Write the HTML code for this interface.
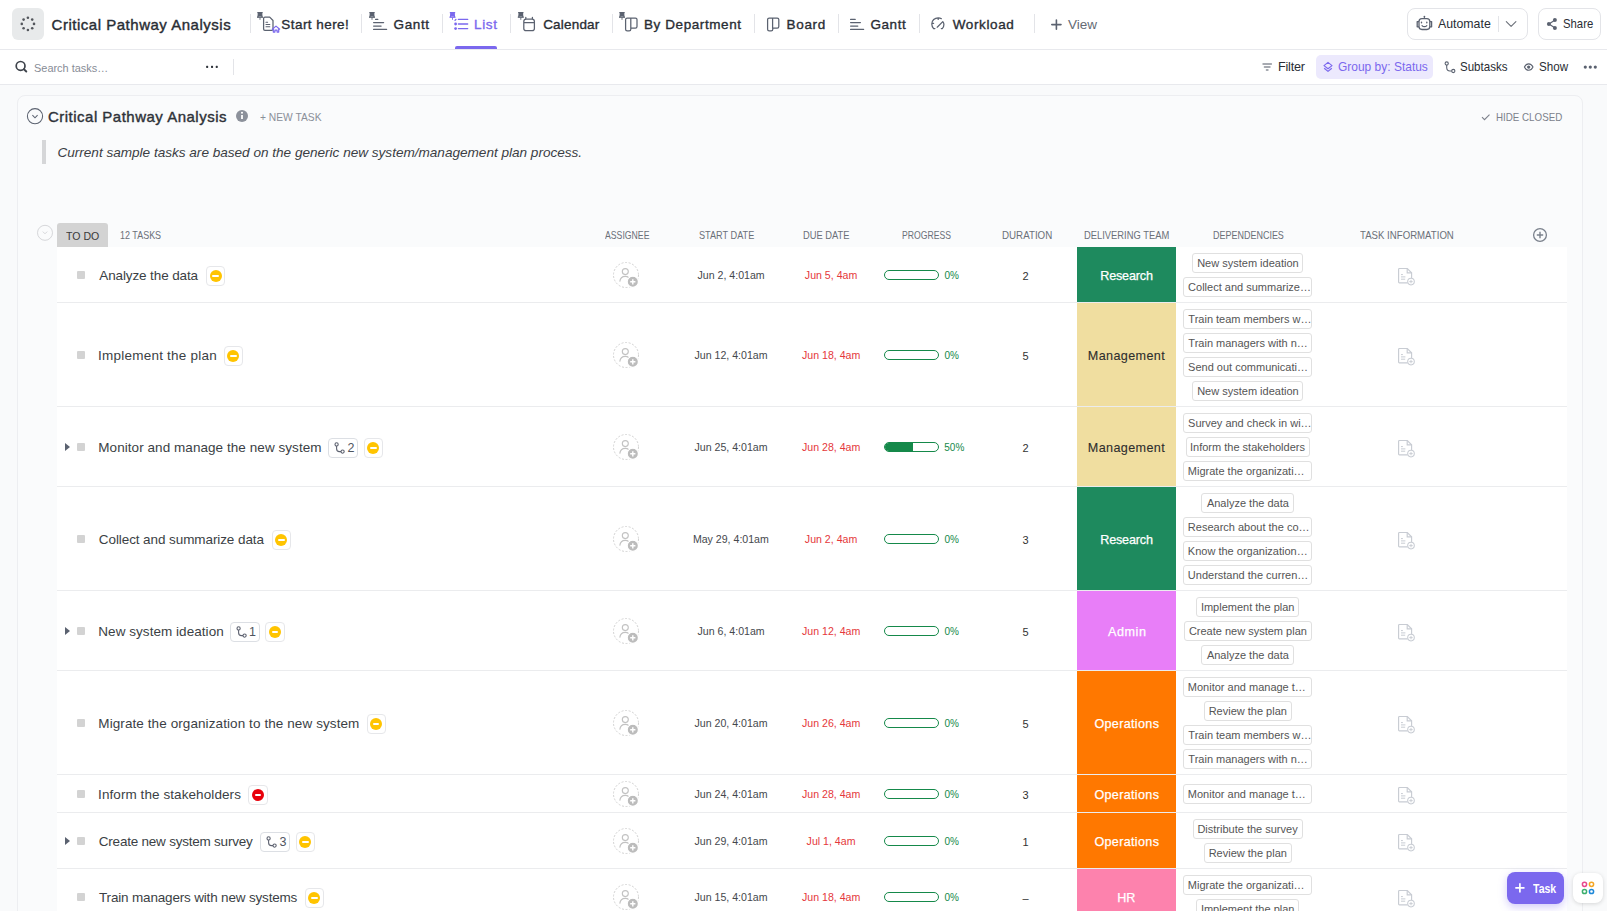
<!DOCTYPE html>
<html><head><meta charset="utf-8">
<style>
*{box-sizing:border-box;margin:0;padding:0}
html,body{width:1607px;height:911px;overflow:hidden;background:#f9fafb;font-family:"Liberation Sans",sans-serif;color:#292d34;position:relative}
.abs{position:absolute}
.t{position:absolute;white-space:nowrap}
#top{position:absolute;left:0;top:0;width:1607px;height:50px;background:#fff;border-bottom:1px solid #e8e9ed}
#tool{position:absolute;left:0;top:50px;width:1607px;height:35px;background:#fff;border-bottom:1px solid #e8e9ed}
.logo{position:absolute;left:12px;top:8px;width:32px;height:32px;border-radius:6px;background:#e8eaeb}
.sep{position:absolute;top:14px;width:1px;height:19px;background:#e3e4e8}
.uline{position:absolute;left:455px;top:46px;width:42px;height:3px;border-radius:2px 2px 0 0;background:#7b68ee}
.btn{position:absolute;top:8px;height:32px;border:1px solid #e3e4e8;border-radius:8px;background:#fff}
#cont{position:absolute;left:17px;top:95px;width:1566px;height:830px;border:1px solid #edeef1;border-radius:8px;background:#fafbfc}
.row{position:absolute;left:57px;width:1510px;background:#fff;border-bottom:1px solid #ebecee}
.arr{position:absolute;left:64.5px;width:0;height:0;border-left:5px solid #5b6270;border-top:4px solid transparent;border-bottom:4px solid transparent}
.chk{position:absolute;left:77px;width:8px;height:8px;border-radius:1px;background:#d3d3d3}
.pb{position:absolute;width:19.5px;height:19.5px;border:1px solid #e6e7ea;border-radius:4px;background:#fff}
.pc{position:absolute;left:2.8px;top:2.8px;width:12px;height:12px;border-radius:50%}
.pd{position:absolute;left:5.6px;top:7.8px;width:6.4px;height:2.2px;background:#fff;border-radius:1px}
.sb{position:absolute;width:31.5px;height:19.6px;border:1px solid #dcdfe4;border-radius:4px;background:#fff}
.sb svg{position:absolute;left:5px;top:2.5px}
.as{position:absolute;left:613px;width:28px;height:28px}
.bar{position:absolute;left:884px;width:55px;height:10px;border:1.5px solid #15894a;border-radius:6px;overflow:hidden;background:#fff}
.pf{position:absolute;left:0;top:0;bottom:0;background:#15894a}
.tm{position:absolute;left:1077px;width:99px}
.dp{position:absolute;height:20px;border:1px solid #e0e0e0;border-radius:3px;background:#fff}
.ti{position:absolute;left:1395.6px;width:20px;height:20px}
</style></head>
<body>
<div id="top">
  <div class="logo"><svg width="32" height="32" viewBox="0 0 32 32"><g fill="#54575d"><circle cx="15.90" cy="9.80" r="1.3"/><circle cx="20.21" cy="11.59" r="1.3"/><circle cx="22.00" cy="15.90" r="1.3"/><circle cx="20.21" cy="20.21" r="1.3"/><circle cx="15.90" cy="22.00" r="1.3"/><circle cx="11.59" cy="20.21" r="1.3"/><circle cx="9.80" cy="15.90" r="1.3"/><circle cx="11.59" cy="11.59" r="1.3"/></g></svg></div>
  <div class="sep" style="left:250px"></div>
  <div class="sep" style="left:361px"></div>
  <div class="sep" style="left:442px"></div>
  <div class="sep" style="left:510px"></div>
  <div class="sep" style="left:612px"></div>
  <div class="sep" style="left:754px"></div>
  <div class="sep" style="left:838px"></div>
  <div class="sep" style="left:919px"></div>
  <div class="sep" style="left:1034px"></div>
  <div class="uline"></div>
  <div class="btn" style="left:1407px;width:121px"></div>
  <div class="btn" style="left:1538px;width:63px"></div>
  <div class="sep" style="left:1498px;top:16px;height:16px"></div>
</div>
<div id="tool"></div>
<div class="abs" style="left:1316px;top:55px;width:117px;height:24px;border-radius:5px;background:#ece9fd"></div>
<div class="sep" style="left:233px;top:59px;height:16px"></div>
<svg class="abs" style="left:0;top:0" width="1607" height="85" viewBox="0 0 1607 85" fill="none">
 <defs>
  <g id="pin"><path d="M5.3 4.6h5.4M6.4 4.6l-.4 4.4M9.6 4.6l.4 4.4" stroke-width="1.2"/><path d="M6.3 5h3.4l.4 3.6H5.9z" stroke="none"/><path d="M5 9.2h6" stroke-width="1.3"/><path d="M8 9.6v2.2" stroke-width="0.9"/></g>
 </defs>
 <g stroke="#5b6270" fill="#5b6270"><use href="#pin" x="252" y="8"/><use href="#pin" x="364" y="8"/><use href="#pin" x="512.8" y="8"/><use href="#pin" x="614" y="8"/></g>
 <g stroke="#7b68ee" fill="#7b68ee"><use href="#pin" x="444.5" y="8"/></g>
 <g stroke="#5b6270" stroke-width="1.25" stroke-linecap="round" stroke-linejoin="round">
  <!-- doc -->
  <path d="M263.6 18.5c0-.8.5-1.4 1.3-1.4h4.8l3.3 3.4v8.5c0 .8-.5 1.4-1.3 1.4h-6.8c-.8 0-1.3-.6-1.3-1.4z"/>
  <path d="M266 22.2h1.6M266 24.5h3.8M266 26.8h3.8" stroke-width="1.1"/>
  <!-- gantt1 -->
  <path d="M375.6 19.4h2.2M373.6 22.5h10M373.6 26h7.5M373.6 29.4h13"/>
  <!-- calendar -->
  <path d="M523.8 21.4c0-1.4 1-2.4 2.3-2.4h6c1.3 0 2.3 1 2.3 2.4v7.1c0 1.3-1 2.2-2.3 2.2h-6c-1.3 0-2.3-.9-2.3-2.2zM523.8 22.5h10.6M525.8 17.3v1.8M532.4 17.3v1.8"/>
  <!-- by dept board -->
  <path d="M625.6 19.6c0-.9.7-1.6 1.6-1.6h8.2c.9 0 1.6.7 1.6 1.6v6.8c0 .9-.7 1.6-1.6 1.6h-4.6v1.2c0 .9-.7 1.6-1.6 1.6h-2c-.9 0-1.6-.7-1.6-1.6zM630.8 18.2v10"/>
  <!-- board -->
  <path d="M767.6 19.6c0-.9.7-1.6 1.6-1.6h8c.9 0 1.6.7 1.6 1.6v6.8c0 .9-.7 1.6-1.6 1.6h-4.4v1.2c0 .9-.7 1.6-1.6 1.6h-2c-.9 0-1.6-.7-1.6-1.6zM772.6 18.2v10"/>
  <!-- gantt2 -->
  <path d="M850.6 19.4h4.6M850.6 22.5h9.8M850.6 26h7.2M850.6 29.4h13"/>
  <!-- workload -->
  <path d="M933.6 28.6c-1.2-1.3-1.8-2.8-1.8-4.6 0-3.6 2.9-6.2 6.4-6.2 1.2 0 2.3.3 3.2.9M943 21.8c.6.8.9 1.7.9 2.8 0 1.6-.5 2.9-1.6 4M934 28.6h.9M941.3 28.6h1M938.2 18.1v1.3M932.3 23.3h1.3M937.2 27.2l5.6-5.6"/>
  <!-- plus view -->
  <path d="M1056.4 20v9.2M1051.8 24.6h9.2" stroke-width="1.6"/>
  <!-- robot -->
  <path d="M1419 21.5c0-1.6 1.3-2.9 2.9-2.9h5c1.6 0 2.9 1.3 2.9 2.9v5.1c0 1.6-1.3 2.9-2.9 2.9h-5c-1.6 0-2.9-1.3-2.9-2.9zM1417.2 21.6v5.2M1431.6 21.6v5.2M1417.2 21.6h1.8M1417.2 26.8h1.8M1431.6 21.6h-1.8M1431.6 26.8h-1.8M1424.4 17.6v1" stroke-width="1.3"/>
  <circle cx="1424.4" cy="16.6" r="0.9" fill="#5b6270" stroke="none"/>
  <path d="M1421.5 22.2v.6M1426.8 22.2v.6" stroke-width="1.4"/>
  <path d="M1422 25.6c.7.8 1.5 1.1 2.4 1.1s1.7-.3 2.4-1.1" stroke-width="1.2"/>
  <!-- chevron -->
  <path d="M1506.3 21.6l4.8 4.8 4.8-4.8" stroke="#6b7079" stroke-width="1.1"/>
  <!-- share -->
  <path d="M1549 24l6-4M1549 24l6 4" stroke-width="1.1"/>
  <circle cx="1554.9" cy="20" r="2" fill="#5b6270" stroke="none"/><circle cx="1548.9" cy="24" r="2" fill="#5b6270" stroke="none"/><circle cx="1554.9" cy="27.9" r="2" fill="#5b6270" stroke="none"/>
  <!-- search -->
  <circle cx="20.6" cy="65.9" r="4.4" stroke="#3f444c" stroke-width="1.7"/><path d="M23.9 69.2l2.4 2.3" stroke="#3f444c" stroke-width="1.9"/>
 </g>
 <!-- home badge purple -->
 <path d="M272 29.5l4-3.4 4 3.4M273.3 28.5v3.6h1.6v-2h2.2v2h1.6v-3.6" stroke="#7b68ee" stroke-width="1.2" stroke-linejoin="round"/>
 <!-- list icon -->
 <g fill="#7b68ee" stroke="none"><circle cx="455.6" cy="24" r="1.4"/><circle cx="455.6" cy="28.6" r="1.4"/></g>
 <path d="M458.4 19.4h9.3M458.4 24h9.3M458.4 28.6h9.3M455 20.4l.9-.9" stroke="#7b68ee" stroke-width="1.3" stroke-linecap="round"/>
 <!-- toolbar dots -->
 <g fill="#2f343b"><rect x="206.1" y="65.8" width="2.1" height="2.1" rx=".6"/><rect x="211" y="65.8" width="2.1" height="2.1" rx=".6"/><rect x="215.7" y="65.8" width="2.1" height="2.1" rx=".6"/></g>
 <!-- filter -->
 <path d="M1263 64h8.4M1264.4 67h5.6M1266.4 70h1.6" stroke="#8a8f98" stroke-width="1.4" stroke-linecap="round"/>
 <!-- group layers -->
 <path d="M1328 62.4l4 3.2-4 3.2-4-3.2zM1324.2 68.2l3.8 3.2 3.8-3.2" stroke="#7b68ee" stroke-width="1.2" stroke-linejoin="round"/>
 <!-- subtasks -->
 <g stroke="#5b6270" stroke-width="1.1"><circle cx="1446.7" cy="63.5" r="1.6"/><circle cx="1453.3" cy="71" r="1.6"/><path d="M1446.7 65.1v2.4c0 1.8 1.3 3.5 3.3 3.5h1.7"/></g>
 <!-- show eye -->
 <g stroke="#5b6270" stroke-width="1.05"><path d="M1524.4 67.1c1-2.1 2.6-3.2 4.3-3.2s3.3 1.1 4.3 3.2c-1 2.1-2.6 3.2-4.3 3.2s-3.3-1.1-4.3-3.2z"/><circle cx="1528.7" cy="67.1" r="1.1" fill="#5b6270"/></g>
 <!-- more dots -->
 <g fill="#5b6270"><circle cx="1585.3" cy="67.1" r="1.6"/><circle cx="1590.3" cy="67.1" r="1.6"/><circle cx="1595.3" cy="67.1" r="1.6"/></g>
</svg>

<div id="cont"></div>
<svg class="abs" style="left:0;top:96px" width="1607" height="160" viewBox="0 96 1607 160" fill="none">
 <circle cx="35" cy="116.2" r="7.6" stroke="#5b6270" stroke-width="1.05"/>
 <path d="M32.4 115.2l2.6 2.6 2.6-2.6" stroke="#5b6270" stroke-width="1.05"/>
 <circle cx="242" cy="116" r="6" fill="#8c919b"/>
 <path d="M242 115v4" stroke="#fff" stroke-width="1.8"/><circle cx="242" cy="112.8" r="1.05" fill="#fff"/>
 <path d="M1482 117.2l2.5 2.5 5-5" stroke="#7c818b" stroke-width="1.1"/>
 <circle cx="45" cy="232.8" r="7.5" stroke="#d6d7da" stroke-width="1"/>
 <path d="M42.8 231.6l2.2 2.2 2.2-2.2" stroke="#d6d7da" stroke-width="1"/>
 <circle cx="1540" cy="235" r="6.4" stroke="#7a818c" stroke-width="1.3"/>
 <path d="M1540 231.8v6.4M1536.8 235h6.4" stroke="#7a818c" stroke-width="1.4"/>
</svg>
<div class="abs" style="left:42px;top:140px;width:4px;height:24px;background:#d5d6d8"></div>
<div class="abs" style="left:57px;top:223px;width:51px;height:24px;border-radius:3px 3px 0 0;background:#d3d3d3"></div>
<div class="t" style="left:51.55px;top:16.00px;font-size:15px;line-height:18px;color:#292d34;letter-spacing:0.517px;-webkit-text-stroke:0.4px #292d34">Critical Pathway Analysis</div>
<div class="t" style="left:281.30px;top:17.00px;font-size:13.5px;line-height:16px;color:#292d34;letter-spacing:0.445px;-webkit-text-stroke:0.35px #292d34">Start here!</div>
<div class="t" style="left:393.50px;top:17.00px;font-size:13.5px;line-height:16px;color:#292d34;letter-spacing:0.625px;-webkit-text-stroke:0.35px #292d34">Gantt</div>
<div class="t" style="left:474.00px;top:17.00px;font-size:13.5px;line-height:16px;color:#7b68ee;letter-spacing:0.667px;-webkit-text-stroke:0.35px #7b68ee">List</div>
<div class="t" style="left:543.20px;top:17.00px;font-size:13.5px;line-height:16px;color:#292d34;letter-spacing:0.186px;-webkit-text-stroke:0.35px #292d34">Calendar</div>
<div class="t" style="left:644.00px;top:17.00px;font-size:13.5px;line-height:16px;color:#292d34;letter-spacing:0.583px;-webkit-text-stroke:0.35px #292d34">By Department</div>
<div class="t" style="left:786.60px;top:17.00px;font-size:13.5px;line-height:16px;color:#292d34;letter-spacing:0.637px;-webkit-text-stroke:0.35px #292d34">Board</div>
<div class="t" style="left:870.50px;top:17.00px;font-size:13.5px;line-height:16px;color:#292d34;letter-spacing:0.550px;-webkit-text-stroke:0.35px #292d34">Gantt</div>
<div class="t" style="left:952.70px;top:17.00px;font-size:13.5px;line-height:16px;color:#292d34;letter-spacing:0.614px;-webkit-text-stroke:0.35px #292d34">Workload</div>
<div class="t" style="left:1068.00px;top:17.00px;font-size:13.5px;line-height:16px;color:#656b75;letter-spacing:0.000px">View</div>
<div class="t" style="left:1438.00px;top:16.00px;font-size:12.8px;line-height:15px;color:#292d34;transform:scaleX(0.9630);transform-origin:0 0">Automate</div>
<div class="t" style="left:1563.16px;top:16.00px;font-size:12.8px;line-height:15px;color:#292d34;transform:scaleX(0.8848);transform-origin:0 0">Share</div>
<div class="t" style="left:33.93px;top:61.00px;font-size:11.6px;line-height:14px;color:#878c96;transform:scaleX(0.9434);transform-origin:0 0">Search tasks…</div>
<div class="t" style="left:1278.00px;top:60.00px;font-size:12.6px;line-height:15px;color:#292d34;letter-spacing:-0.200px">Filter</div>
<div class="t" style="left:1337.92px;top:60.00px;font-size:12.6px;line-height:15px;color:#7b68ee;transform:scaleX(0.9509);transform-origin:0 0">Group by: Status</div>
<div class="t" style="left:1460.14px;top:60.00px;font-size:12.6px;line-height:15px;color:#292d34;transform:scaleX(0.9168);transform-origin:0 0">Subtasks</div>
<div class="t" style="left:1539.04px;top:60.00px;font-size:12.6px;line-height:15px;color:#292d34;transform:scaleX(0.9236);transform-origin:0 0">Show</div>
<div class="t" style="left:47.95px;top:108.00px;font-size:15px;line-height:18px;color:#2e3238;letter-spacing:0.492px;-webkit-text-stroke:0.4px #2e3238">Critical Pathway Analysis</div>
<div class="t" style="left:259.83px;top:111.00px;font-size:11px;line-height:13px;color:#8a8f99;transform:scaleX(0.9333);transform-origin:0 0">+ NEW TASK</div>
<div class="t" style="left:1495.73px;top:111.00px;font-size:11px;line-height:13px;color:#7c818b;transform:scaleX(0.8884);transform-origin:0 0">HIDE CLOSED</div>
<div class="t" style="left:57.45px;top:145.00px;font-size:13.6px;line-height:16px;color:#3b3e44;letter-spacing:-0.015px;font-style:italic">Current sample tasks are based on the generic new system/management plan process.</div>
<div class="t" style="left:65.66px;top:230.00px;font-size:11px;line-height:13px;color:#3a3a3a;transform:scaleX(0.9600);transform-origin:0 0">TO DO</div>
<div class="t" style="left:120.36px;top:229.00px;font-size:10.5px;line-height:13px;color:#6b7079;transform:scaleX(0.8556);transform-origin:0 0">12 TASKS</div>
<div class="t" style="left:604.60px;top:230.00px;font-size:10.2px;line-height:12px;color:#6b7079;transform:scaleX(0.8538);transform-origin:0 0">ASSIGNEE</div>
<div class="t" style="left:699.05px;top:230.00px;font-size:10.2px;line-height:12px;color:#6b7079;transform:scaleX(0.8984);transform-origin:0 0">START DATE</div>
<div class="t" style="left:803.31px;top:230.00px;font-size:10.2px;line-height:12px;color:#6b7079;transform:scaleX(0.9160);transform-origin:0 0">DUE DATE</div>
<div class="t" style="left:902.06px;top:230.00px;font-size:10.2px;line-height:12px;color:#6b7079;transform:scaleX(0.8474);transform-origin:0 0">PROGRESS</div>
<div class="t" style="left:1001.58px;top:230.00px;font-size:10.2px;line-height:12px;color:#6b7079;transform:scaleX(0.9580);transform-origin:0 0">DURATION</div>
<div class="t" style="left:1083.91px;top:230.00px;font-size:10.2px;line-height:12px;color:#6b7079;transform:scaleX(0.9199);transform-origin:0 0">DELIVERING TEAM</div>
<div class="t" style="left:1213.04px;top:230.00px;font-size:10.2px;line-height:12px;color:#6b7079;transform:scaleX(0.8815);transform-origin:0 0">DEPENDENCIES</div>
<div class="t" style="left:1359.76px;top:230.00px;font-size:10.2px;line-height:12px;color:#6b7079;transform:scaleX(0.9455);transform-origin:0 0">TASK INFORMATION</div>
<div class="row" style="top:247px;height:56px"></div><div class="chk" style="top:271.0px"></div><div class="t" style="left:99.30px;top:268.00px;font-size:13.5px;line-height:16px;color:#3b3f45;letter-spacing:-0.120px">Analyze the data</div><div class="pb" style="left:205.8px;top:266.2px"><span class="pc" style="background:#ffc400"></span><span class="pd"></span></div><div class="as" style="top:262.0px"><svg width="28" height="28" viewBox="0 0 28 28" fill="none"><circle cx="13" cy="13" r="12.5" stroke="#d2d2d2" stroke-width="1" stroke-dasharray="2 1.6"/><circle cx="12.3" cy="9.6" r="3" stroke="#c2c2c2" stroke-width="1.1"/><path d="M6.8 19.6c.3-3 2.6-5.2 5.5-5.2 1.4 0 2.6.5 3.6 1.3" stroke="#c2c2c2" stroke-width="1.1"/><circle cx="19.8" cy="19.8" r="5.6" fill="#bcbcbc" stroke="#fff" stroke-width="1.2"/><path d="M19.8 17.2v5.2M17.2 19.8h5.2" stroke="#fff" stroke-width="1.4"/></svg></div><div class="t" style="left:697.50px;top:269.00px;font-size:10.6px;line-height:13px;color:#45484d;letter-spacing:0.000px">Jun 2, 4:01am</div><div class="t" style="left:804.85px;top:269.00px;font-size:10.6px;line-height:13px;color:#e5383b;letter-spacing:0.000px">Jun 5, 4am</div><div class="bar" style="top:270.0px"></div><div class="t" style="left:944.55px;top:270.00px;font-size:10px;line-height:12px;color:#15894a;letter-spacing:0.000px">0%</div><div class="t" style="left:1022.58px;top:270.00px;font-size:11px;line-height:13px;color:#333333;letter-spacing:0.000px">2</div><div class="tm" style="top:247px;height:55px;background:#1e8a5e"></div><div class="t" style="left:1100.25px;top:269.00px;font-size:12.6px;line-height:15px;color:#ffffff;letter-spacing:-0.179px;-webkit-text-stroke:0.25px #ffffff">Research</div><div class="dp" style="left:1192.4px;top:253px;width:111.0px"></div><div class="t" style="left:1197.15px;top:257.00px;font-size:11px;line-height:13px;color:#555555;letter-spacing:0.000px">New system ideation</div><div class="dp" style="left:1183.4px;top:277px;width:129.0px"></div><div class="t" style="left:1188.10px;top:281.00px;font-size:11px;line-height:13px;color:#555555;letter-spacing:0.000px">Collect and summarize…</div><div class="ti" style="top:266.9px"><svg width="20" height="20" viewBox="0 0 20 20" fill="none"><path d="M11.6 15.8H3.4c-.5 0-.8-.3-.8-.8V2.3c0-.5.3-.8.8-.8h7.9l4.3 4.3v5.4" stroke="#c8ccd3" stroke-width="1.15"/><path d="M11.2 1.7v4.2h4.2" stroke="#c8ccd3" stroke-width="1.15"/><path d="M5 7.6h1.9M5 9.9h4.4M5 12.2h4.2" stroke="#c8ccd3" stroke-width="1"/><circle cx="15" cy="14.6" r="3.3" fill="#fff" stroke="#c8ccd3" stroke-width="1.05"/><path d="M15 12.9v3.4M13.3 14.6h3.4" stroke="#c8ccd3" stroke-width="0.95"/></svg></div>
<div class="row" style="top:303px;height:104px"></div><div class="chk" style="top:351.0px"></div><div class="t" style="left:98.05px;top:348.00px;font-size:13.5px;line-height:16px;color:#3b3f45;letter-spacing:0.226px">Implement the plan</div><div class="pb" style="left:223.7px;top:346.2px"><span class="pc" style="background:#ffc400"></span><span class="pd"></span></div><div class="as" style="top:342.0px"><svg width="28" height="28" viewBox="0 0 28 28" fill="none"><circle cx="13" cy="13" r="12.5" stroke="#d2d2d2" stroke-width="1" stroke-dasharray="2 1.6"/><circle cx="12.3" cy="9.6" r="3" stroke="#c2c2c2" stroke-width="1.1"/><path d="M6.8 19.6c.3-3 2.6-5.2 5.5-5.2 1.4 0 2.6.5 3.6 1.3" stroke="#c2c2c2" stroke-width="1.1"/><circle cx="19.8" cy="19.8" r="5.6" fill="#bcbcbc" stroke="#fff" stroke-width="1.2"/><path d="M19.8 17.2v5.2M17.2 19.8h5.2" stroke="#fff" stroke-width="1.4"/></svg></div><div class="t" style="left:694.50px;top:349.00px;font-size:10.6px;line-height:13px;color:#45484d;letter-spacing:0.000px">Jun 12, 4:01am</div><div class="t" style="left:801.98px;top:349.00px;font-size:10.6px;line-height:13px;color:#e5383b;letter-spacing:0.000px">Jun 18, 4am</div><div class="bar" style="top:350.0px"></div><div class="t" style="left:944.55px;top:350.00px;font-size:10px;line-height:12px;color:#15894a;letter-spacing:0.000px">0%</div><div class="t" style="left:1022.58px;top:350.00px;font-size:11px;line-height:13px;color:#333333;letter-spacing:0.000px">5</div><div class="tm" style="top:303px;height:103px;background:#f0dea0"></div><div class="t" style="left:1087.85px;top:349.00px;font-size:12.6px;line-height:15px;color:#2e2e2e;letter-spacing:0.367px;-webkit-text-stroke:0.1px #2e2e2e">Management</div><div class="dp" style="left:1183.4px;top:309px;width:129.0px"></div><div class="t" style="left:1188.35px;top:313.00px;font-size:11px;line-height:13px;color:#555555;letter-spacing:0.000px">Train team members w…</div><div class="dp" style="left:1183.4px;top:333px;width:129.0px"></div><div class="t" style="left:1188.35px;top:337.00px;font-size:11px;line-height:13px;color:#555555;letter-spacing:0.000px">Train managers with n…</div><div class="dp" style="left:1183.4px;top:357px;width:129.0px"></div><div class="t" style="left:1188.10px;top:361.00px;font-size:11px;line-height:13px;color:#555555;letter-spacing:0.000px">Send out communicati…</div><div class="dp" style="left:1192.4px;top:381px;width:111.0px"></div><div class="t" style="left:1197.15px;top:385.00px;font-size:11px;line-height:13px;color:#555555;letter-spacing:0.000px">New system ideation</div><div class="ti" style="top:346.9px"><svg width="20" height="20" viewBox="0 0 20 20" fill="none"><path d="M11.6 15.8H3.4c-.5 0-.8-.3-.8-.8V2.3c0-.5.3-.8.8-.8h7.9l4.3 4.3v5.4" stroke="#c8ccd3" stroke-width="1.15"/><path d="M11.2 1.7v4.2h4.2" stroke="#c8ccd3" stroke-width="1.15"/><path d="M5 7.6h1.9M5 9.9h4.4M5 12.2h4.2" stroke="#c8ccd3" stroke-width="1"/><circle cx="15" cy="14.6" r="3.3" fill="#fff" stroke="#c8ccd3" stroke-width="1.05"/><path d="M15 12.9v3.4M13.3 14.6h3.4" stroke="#c8ccd3" stroke-width="0.95"/></svg></div>
<div class="row" style="top:407px;height:80px"></div><div class="arr" style="top:443.0px"></div><div class="chk" style="top:443.0px"></div><div class="t" style="left:98.30px;top:440.00px;font-size:13.5px;line-height:16px;color:#3b3f45;letter-spacing:0.059px">Monitor and manage the new system</div><div class="sb" style="left:328.2px;top:438.2px;width:29.7px"><svg width="12" height="13" viewBox="0 0 12 13" fill="none"><circle cx="2.6" cy="2.4" r="1.6" stroke="#5d6270" stroke-width="1.1"/><circle cx="8.6" cy="9.6" r="1.6" stroke="#5d6270" stroke-width="1.1"/><path d="M2.6 4v2.8c0 1.6 1.1 2.8 2.8 2.8H7" stroke="#5d6270" stroke-width="1.1"/></svg></div><div class="t" style="left:347.40px;top:441.00px;font-size:12.5px;line-height:15px;color:#4f5560;letter-spacing:0.000px">2</div><div class="pb" style="left:363.7px;top:438.2px"><span class="pc" style="background:#ffc400"></span><span class="pd"></span></div><div class="as" style="top:434.0px"><svg width="28" height="28" viewBox="0 0 28 28" fill="none"><circle cx="13" cy="13" r="12.5" stroke="#d2d2d2" stroke-width="1" stroke-dasharray="2 1.6"/><circle cx="12.3" cy="9.6" r="3" stroke="#c2c2c2" stroke-width="1.1"/><path d="M6.8 19.6c.3-3 2.6-5.2 5.5-5.2 1.4 0 2.6.5 3.6 1.3" stroke="#c2c2c2" stroke-width="1.1"/><circle cx="19.8" cy="19.8" r="5.6" fill="#bcbcbc" stroke="#fff" stroke-width="1.2"/><path d="M19.8 17.2v5.2M17.2 19.8h5.2" stroke="#fff" stroke-width="1.4"/></svg></div><div class="t" style="left:694.50px;top:441.00px;font-size:10.6px;line-height:13px;color:#45484d;letter-spacing:0.000px">Jun 25, 4:01am</div><div class="t" style="left:801.98px;top:441.00px;font-size:10.6px;line-height:13px;color:#e5383b;letter-spacing:0.000px">Jun 28, 4am</div><div class="bar" style="top:442.0px"><span class="pf" style="width:27.5px"></span></div><div class="t" style="left:944.30px;top:442.00px;font-size:10px;line-height:12px;color:#15894a;letter-spacing:0.000px">50%</div><div class="t" style="left:1022.58px;top:442.00px;font-size:11px;line-height:13px;color:#333333;letter-spacing:0.000px">2</div><div class="tm" style="top:407px;height:79px;background:#f0dea0"></div><div class="t" style="left:1087.85px;top:441.00px;font-size:12.6px;line-height:15px;color:#2e2e2e;letter-spacing:0.367px;-webkit-text-stroke:0.1px #2e2e2e">Management</div><div class="dp" style="left:1183.4px;top:413px;width:129.0px"></div><div class="t" style="left:1188.10px;top:417.00px;font-size:11px;line-height:13px;color:#555555;letter-spacing:0.000px">Survey and check in wi…</div><div class="dp" style="left:1185.5px;top:437px;width:124.8px"></div><div class="t" style="left:1190.03px;top:441.00px;font-size:11px;line-height:13px;color:#555555;letter-spacing:0.000px">Inform the stakeholders</div><div class="dp" style="left:1183.4px;top:461px;width:129.0px"></div><div class="t" style="left:1187.85px;top:465.00px;font-size:11px;line-height:13px;color:#555555;letter-spacing:0.000px">Migrate the organizati…</div><div class="ti" style="top:438.9px"><svg width="20" height="20" viewBox="0 0 20 20" fill="none"><path d="M11.6 15.8H3.4c-.5 0-.8-.3-.8-.8V2.3c0-.5.3-.8.8-.8h7.9l4.3 4.3v5.4" stroke="#c8ccd3" stroke-width="1.15"/><path d="M11.2 1.7v4.2h4.2" stroke="#c8ccd3" stroke-width="1.15"/><path d="M5 7.6h1.9M5 9.9h4.4M5 12.2h4.2" stroke="#c8ccd3" stroke-width="1"/><circle cx="15" cy="14.6" r="3.3" fill="#fff" stroke="#c8ccd3" stroke-width="1.05"/><path d="M15 12.9v3.4M13.3 14.6h3.4" stroke="#c8ccd3" stroke-width="0.95"/></svg></div>
<div class="row" style="top:487px;height:104px"></div><div class="chk" style="top:535.0px"></div><div class="t" style="left:98.80px;top:532.00px;font-size:13.5px;line-height:16px;color:#3b3f45;letter-spacing:-0.086px">Collect and summarize data</div><div class="pb" style="left:271.7px;top:530.2px"><span class="pc" style="background:#ffc400"></span><span class="pd"></span></div><div class="as" style="top:526.0px"><svg width="28" height="28" viewBox="0 0 28 28" fill="none"><circle cx="13" cy="13" r="12.5" stroke="#d2d2d2" stroke-width="1" stroke-dasharray="2 1.6"/><circle cx="12.3" cy="9.6" r="3" stroke="#c2c2c2" stroke-width="1.1"/><path d="M6.8 19.6c.3-3 2.6-5.2 5.5-5.2 1.4 0 2.6.5 3.6 1.3" stroke="#c2c2c2" stroke-width="1.1"/><circle cx="19.8" cy="19.8" r="5.6" fill="#bcbcbc" stroke="#fff" stroke-width="1.2"/><path d="M19.8 17.2v5.2M17.2 19.8h5.2" stroke="#fff" stroke-width="1.4"/></svg></div><div class="t" style="left:692.88px;top:533.00px;font-size:10.6px;line-height:13px;color:#45484d;letter-spacing:0.000px">May 29, 4:01am</div><div class="t" style="left:804.85px;top:533.00px;font-size:10.6px;line-height:13px;color:#e5383b;letter-spacing:0.000px">Jun 2, 4am</div><div class="bar" style="top:534.0px"></div><div class="t" style="left:944.55px;top:534.00px;font-size:10px;line-height:12px;color:#15894a;letter-spacing:0.000px">0%</div><div class="t" style="left:1022.58px;top:534.00px;font-size:11px;line-height:13px;color:#333333;letter-spacing:0.000px">3</div><div class="tm" style="top:487px;height:103px;background:#1e8a5e"></div><div class="t" style="left:1100.25px;top:533.00px;font-size:12.6px;line-height:15px;color:#ffffff;letter-spacing:-0.179px;-webkit-text-stroke:0.25px #ffffff">Research</div><div class="dp" style="left:1201.4px;top:493px;width:93.0px"></div><div class="t" style="left:1206.90px;top:497.00px;font-size:11px;line-height:13px;color:#555555;letter-spacing:0.000px">Analyze the data</div><div class="dp" style="left:1183.4px;top:517px;width:129.0px"></div><div class="t" style="left:1187.85px;top:521.00px;font-size:11px;line-height:13px;color:#555555;letter-spacing:0.000px">Research about the co…</div><div class="dp" style="left:1183.4px;top:541px;width:129.0px"></div><div class="t" style="left:1187.85px;top:545.00px;font-size:11px;line-height:13px;color:#555555;letter-spacing:0.000px">Know the organization…</div><div class="dp" style="left:1183.4px;top:565px;width:129.0px"></div><div class="t" style="left:1187.85px;top:569.00px;font-size:11px;line-height:13px;color:#555555;letter-spacing:0.000px">Understand the curren…</div><div class="ti" style="top:530.9px"><svg width="20" height="20" viewBox="0 0 20 20" fill="none"><path d="M11.6 15.8H3.4c-.5 0-.8-.3-.8-.8V2.3c0-.5.3-.8.8-.8h7.9l4.3 4.3v5.4" stroke="#c8ccd3" stroke-width="1.15"/><path d="M11.2 1.7v4.2h4.2" stroke="#c8ccd3" stroke-width="1.15"/><path d="M5 7.6h1.9M5 9.9h4.4M5 12.2h4.2" stroke="#c8ccd3" stroke-width="1"/><circle cx="15" cy="14.6" r="3.3" fill="#fff" stroke="#c8ccd3" stroke-width="1.05"/><path d="M15 12.9v3.4M13.3 14.6h3.4" stroke="#c8ccd3" stroke-width="0.95"/></svg></div>
<div class="row" style="top:591px;height:80px"></div><div class="arr" style="top:627.0px"></div><div class="chk" style="top:627.0px"></div><div class="t" style="left:98.30px;top:624.00px;font-size:13.5px;line-height:16px;color:#3b3f45;letter-spacing:0.047px">New system ideation</div><div class="sb" style="left:230.4px;top:622.2px;width:29.2px"><svg width="12" height="13" viewBox="0 0 12 13" fill="none"><circle cx="2.6" cy="2.4" r="1.6" stroke="#5d6270" stroke-width="1.1"/><circle cx="8.6" cy="9.6" r="1.6" stroke="#5d6270" stroke-width="1.1"/><path d="M2.6 4v2.8c0 1.6 1.1 2.8 2.8 2.8H7" stroke="#5d6270" stroke-width="1.1"/></svg></div><div class="t" style="left:249.10px;top:625.00px;font-size:12.5px;line-height:15px;color:#4f5560;letter-spacing:0.000px">1</div><div class="pb" style="left:265.4px;top:622.2px"><span class="pc" style="background:#ffc400"></span><span class="pd"></span></div><div class="as" style="top:618.0px"><svg width="28" height="28" viewBox="0 0 28 28" fill="none"><circle cx="13" cy="13" r="12.5" stroke="#d2d2d2" stroke-width="1" stroke-dasharray="2 1.6"/><circle cx="12.3" cy="9.6" r="3" stroke="#c2c2c2" stroke-width="1.1"/><path d="M6.8 19.6c.3-3 2.6-5.2 5.5-5.2 1.4 0 2.6.5 3.6 1.3" stroke="#c2c2c2" stroke-width="1.1"/><circle cx="19.8" cy="19.8" r="5.6" fill="#bcbcbc" stroke="#fff" stroke-width="1.2"/><path d="M19.8 17.2v5.2M17.2 19.8h5.2" stroke="#fff" stroke-width="1.4"/></svg></div><div class="t" style="left:697.50px;top:625.00px;font-size:10.6px;line-height:13px;color:#45484d;letter-spacing:0.000px">Jun 6, 4:01am</div><div class="t" style="left:801.98px;top:625.00px;font-size:10.6px;line-height:13px;color:#e5383b;letter-spacing:0.000px">Jun 12, 4am</div><div class="bar" style="top:626.0px"></div><div class="t" style="left:944.55px;top:626.00px;font-size:10px;line-height:12px;color:#15894a;letter-spacing:0.000px">0%</div><div class="t" style="left:1022.58px;top:626.00px;font-size:11px;line-height:13px;color:#333333;letter-spacing:0.000px">5</div><div class="tm" style="top:591px;height:79px;background:#e87ef8"></div><div class="t" style="left:1108.00px;top:625.00px;font-size:12.6px;line-height:15px;color:#ffffff;letter-spacing:0.562px;-webkit-text-stroke:0.25px #ffffff">Admin</div><div class="dp" style="left:1196.4px;top:597px;width:103.0px"></div><div class="t" style="left:1200.90px;top:601.00px;font-size:11px;line-height:13px;color:#555555;letter-spacing:0.000px">Implement the plan</div><div class="dp" style="left:1183.9px;top:621px;width:128.0px"></div><div class="t" style="left:1188.90px;top:625.00px;font-size:11px;line-height:13px;color:#555555;letter-spacing:0.000px">Create new system plan</div><div class="dp" style="left:1201.4px;top:645px;width:93.0px"></div><div class="t" style="left:1206.90px;top:649.00px;font-size:11px;line-height:13px;color:#555555;letter-spacing:0.000px">Analyze the data</div><div class="ti" style="top:622.9px"><svg width="20" height="20" viewBox="0 0 20 20" fill="none"><path d="M11.6 15.8H3.4c-.5 0-.8-.3-.8-.8V2.3c0-.5.3-.8.8-.8h7.9l4.3 4.3v5.4" stroke="#c8ccd3" stroke-width="1.15"/><path d="M11.2 1.7v4.2h4.2" stroke="#c8ccd3" stroke-width="1.15"/><path d="M5 7.6h1.9M5 9.9h4.4M5 12.2h4.2" stroke="#c8ccd3" stroke-width="1"/><circle cx="15" cy="14.6" r="3.3" fill="#fff" stroke="#c8ccd3" stroke-width="1.05"/><path d="M15 12.9v3.4M13.3 14.6h3.4" stroke="#c8ccd3" stroke-width="0.95"/></svg></div>
<div class="row" style="top:671px;height:104px"></div><div class="chk" style="top:719.0px"></div><div class="t" style="left:98.30px;top:716.00px;font-size:13.5px;line-height:16px;color:#3b3f45;letter-spacing:0.089px">Migrate the organization to the new system</div><div class="pb" style="left:366.5px;top:714.2px"><span class="pc" style="background:#ffc400"></span><span class="pd"></span></div><div class="as" style="top:710.0px"><svg width="28" height="28" viewBox="0 0 28 28" fill="none"><circle cx="13" cy="13" r="12.5" stroke="#d2d2d2" stroke-width="1" stroke-dasharray="2 1.6"/><circle cx="12.3" cy="9.6" r="3" stroke="#c2c2c2" stroke-width="1.1"/><path d="M6.8 19.6c.3-3 2.6-5.2 5.5-5.2 1.4 0 2.6.5 3.6 1.3" stroke="#c2c2c2" stroke-width="1.1"/><circle cx="19.8" cy="19.8" r="5.6" fill="#bcbcbc" stroke="#fff" stroke-width="1.2"/><path d="M19.8 17.2v5.2M17.2 19.8h5.2" stroke="#fff" stroke-width="1.4"/></svg></div><div class="t" style="left:694.50px;top:717.00px;font-size:10.6px;line-height:13px;color:#45484d;letter-spacing:0.000px">Jun 20, 4:01am</div><div class="t" style="left:801.98px;top:717.00px;font-size:10.6px;line-height:13px;color:#e5383b;letter-spacing:0.000px">Jun 26, 4am</div><div class="bar" style="top:718.0px"></div><div class="t" style="left:944.55px;top:718.00px;font-size:10px;line-height:12px;color:#15894a;letter-spacing:0.000px">0%</div><div class="t" style="left:1022.58px;top:718.00px;font-size:11px;line-height:13px;color:#333333;letter-spacing:0.000px">5</div><div class="tm" style="top:671px;height:103px;background:#ff7800"></div><div class="t" style="left:1094.40px;top:717.00px;font-size:12.6px;line-height:15px;color:#ffffff;letter-spacing:0.328px;-webkit-text-stroke:0.25px #ffffff">Operations</div><div class="dp" style="left:1183.4px;top:677px;width:129.0px"></div><div class="t" style="left:1187.85px;top:681.00px;font-size:11px;line-height:13px;color:#555555;letter-spacing:0.000px">Monitor and manage t…</div><div class="dp" style="left:1203.9px;top:701px;width:88.0px"></div><div class="t" style="left:1208.65px;top:705.00px;font-size:11px;line-height:13px;color:#555555;letter-spacing:0.000px">Review the plan</div><div class="dp" style="left:1183.4px;top:725px;width:129.0px"></div><div class="t" style="left:1188.35px;top:729.00px;font-size:11px;line-height:13px;color:#555555;letter-spacing:0.000px">Train team members w…</div><div class="dp" style="left:1183.4px;top:749px;width:129.0px"></div><div class="t" style="left:1188.35px;top:753.00px;font-size:11px;line-height:13px;color:#555555;letter-spacing:0.000px">Train managers with n…</div><div class="ti" style="top:714.9px"><svg width="20" height="20" viewBox="0 0 20 20" fill="none"><path d="M11.6 15.8H3.4c-.5 0-.8-.3-.8-.8V2.3c0-.5.3-.8.8-.8h7.9l4.3 4.3v5.4" stroke="#c8ccd3" stroke-width="1.15"/><path d="M11.2 1.7v4.2h4.2" stroke="#c8ccd3" stroke-width="1.15"/><path d="M5 7.6h1.9M5 9.9h4.4M5 12.2h4.2" stroke="#c8ccd3" stroke-width="1"/><circle cx="15" cy="14.6" r="3.3" fill="#fff" stroke="#c8ccd3" stroke-width="1.05"/><path d="M15 12.9v3.4M13.3 14.6h3.4" stroke="#c8ccd3" stroke-width="0.95"/></svg></div>
<div class="row" style="top:775px;height:38px"></div><div class="chk" style="top:790.0px"></div><div class="t" style="left:98.05px;top:787.00px;font-size:13.5px;line-height:16px;color:#3b3f45;letter-spacing:0.080px">Inform the stakeholders</div><div class="pb" style="left:248.1px;top:785.2px"><span class="pc" style="background:#e8000b"></span><span class="pd"></span></div><div class="as" style="top:781.0px"><svg width="28" height="28" viewBox="0 0 28 28" fill="none"><circle cx="13" cy="13" r="12.5" stroke="#d2d2d2" stroke-width="1" stroke-dasharray="2 1.6"/><circle cx="12.3" cy="9.6" r="3" stroke="#c2c2c2" stroke-width="1.1"/><path d="M6.8 19.6c.3-3 2.6-5.2 5.5-5.2 1.4 0 2.6.5 3.6 1.3" stroke="#c2c2c2" stroke-width="1.1"/><circle cx="19.8" cy="19.8" r="5.6" fill="#bcbcbc" stroke="#fff" stroke-width="1.2"/><path d="M19.8 17.2v5.2M17.2 19.8h5.2" stroke="#fff" stroke-width="1.4"/></svg></div><div class="t" style="left:694.50px;top:788.00px;font-size:10.6px;line-height:13px;color:#45484d;letter-spacing:0.000px">Jun 24, 4:01am</div><div class="t" style="left:801.98px;top:788.00px;font-size:10.6px;line-height:13px;color:#e5383b;letter-spacing:0.000px">Jun 28, 4am</div><div class="bar" style="top:789.0px"></div><div class="t" style="left:944.55px;top:789.00px;font-size:10px;line-height:12px;color:#15894a;letter-spacing:0.000px">0%</div><div class="t" style="left:1022.58px;top:789.00px;font-size:11px;line-height:13px;color:#333333;letter-spacing:0.000px">3</div><div class="tm" style="top:775px;height:37px;background:#ff7800"></div><div class="t" style="left:1094.40px;top:788.00px;font-size:12.6px;line-height:15px;color:#ffffff;letter-spacing:0.328px;-webkit-text-stroke:0.25px #ffffff">Operations</div><div class="dp" style="left:1183.4px;top:784px;width:129.0px"></div><div class="t" style="left:1187.85px;top:788.00px;font-size:11px;line-height:13px;color:#555555;letter-spacing:0.000px">Monitor and manage t…</div><div class="ti" style="top:785.9px"><svg width="20" height="20" viewBox="0 0 20 20" fill="none"><path d="M11.6 15.8H3.4c-.5 0-.8-.3-.8-.8V2.3c0-.5.3-.8.8-.8h7.9l4.3 4.3v5.4" stroke="#c8ccd3" stroke-width="1.15"/><path d="M11.2 1.7v4.2h4.2" stroke="#c8ccd3" stroke-width="1.15"/><path d="M5 7.6h1.9M5 9.9h4.4M5 12.2h4.2" stroke="#c8ccd3" stroke-width="1"/><circle cx="15" cy="14.6" r="3.3" fill="#fff" stroke="#c8ccd3" stroke-width="1.05"/><path d="M15 12.9v3.4M13.3 14.6h3.4" stroke="#c8ccd3" stroke-width="0.95"/></svg></div>
<div class="row" style="top:813px;height:56px"></div><div class="arr" style="top:837.0px"></div><div class="chk" style="top:837.0px"></div><div class="t" style="left:98.80px;top:834.00px;font-size:13.5px;line-height:16px;color:#3b3f45;letter-spacing:-0.222px">Create new system survey</div><div class="sb" style="left:260.2px;top:832.2px;width:29.7px"><svg width="12" height="13" viewBox="0 0 12 13" fill="none"><circle cx="2.6" cy="2.4" r="1.6" stroke="#5d6270" stroke-width="1.1"/><circle cx="8.6" cy="9.6" r="1.6" stroke="#5d6270" stroke-width="1.1"/><path d="M2.6 4v2.8c0 1.6 1.1 2.8 2.8 2.8H7" stroke="#5d6270" stroke-width="1.1"/></svg></div><div class="t" style="left:279.40px;top:835.00px;font-size:12.5px;line-height:15px;color:#4f5560;letter-spacing:0.000px">3</div><div class="pb" style="left:295.7px;top:832.2px"><span class="pc" style="background:#ffc400"></span><span class="pd"></span></div><div class="as" style="top:828.0px"><svg width="28" height="28" viewBox="0 0 28 28" fill="none"><circle cx="13" cy="13" r="12.5" stroke="#d2d2d2" stroke-width="1" stroke-dasharray="2 1.6"/><circle cx="12.3" cy="9.6" r="3" stroke="#c2c2c2" stroke-width="1.1"/><path d="M6.8 19.6c.3-3 2.6-5.2 5.5-5.2 1.4 0 2.6.5 3.6 1.3" stroke="#c2c2c2" stroke-width="1.1"/><circle cx="19.8" cy="19.8" r="5.6" fill="#bcbcbc" stroke="#fff" stroke-width="1.2"/><path d="M19.8 17.2v5.2M17.2 19.8h5.2" stroke="#fff" stroke-width="1.4"/></svg></div><div class="t" style="left:694.50px;top:835.00px;font-size:10.6px;line-height:13px;color:#45484d;letter-spacing:0.000px">Jun 29, 4:01am</div><div class="t" style="left:806.60px;top:835.00px;font-size:10.6px;line-height:13px;color:#e5383b;letter-spacing:0.000px">Jul 1, 4am</div><div class="bar" style="top:836.0px"></div><div class="t" style="left:944.55px;top:836.00px;font-size:10px;line-height:12px;color:#15894a;letter-spacing:0.000px">0%</div><div class="t" style="left:1022.45px;top:836.00px;font-size:11px;line-height:13px;color:#333333;letter-spacing:0.000px">1</div><div class="tm" style="top:813px;height:55px;background:#ff7800"></div><div class="t" style="left:1094.40px;top:835.00px;font-size:12.6px;line-height:15px;color:#ffffff;letter-spacing:0.328px;-webkit-text-stroke:0.25px #ffffff">Operations</div><div class="dp" style="left:1192.7px;top:819px;width:110.5px"></div><div class="t" style="left:1197.40px;top:823.00px;font-size:11px;line-height:13px;color:#555555;letter-spacing:0.000px">Distribute the survey</div><div class="dp" style="left:1203.9px;top:843px;width:88.0px"></div><div class="t" style="left:1208.65px;top:847.00px;font-size:11px;line-height:13px;color:#555555;letter-spacing:0.000px">Review the plan</div><div class="ti" style="top:832.9px"><svg width="20" height="20" viewBox="0 0 20 20" fill="none"><path d="M11.6 15.8H3.4c-.5 0-.8-.3-.8-.8V2.3c0-.5.3-.8.8-.8h7.9l4.3 4.3v5.4" stroke="#c8ccd3" stroke-width="1.15"/><path d="M11.2 1.7v4.2h4.2" stroke="#c8ccd3" stroke-width="1.15"/><path d="M5 7.6h1.9M5 9.9h4.4M5 12.2h4.2" stroke="#c8ccd3" stroke-width="1"/><circle cx="15" cy="14.6" r="3.3" fill="#fff" stroke="#c8ccd3" stroke-width="1.05"/><path d="M15 12.9v3.4M13.3 14.6h3.4" stroke="#c8ccd3" stroke-width="0.95"/></svg></div>
<div class="row" style="top:869px;height:56px"></div><div class="chk" style="top:893.0px"></div><div class="t" style="left:99.05px;top:890.00px;font-size:13.5px;line-height:16px;color:#3b3f45;letter-spacing:-0.175px">Train managers with new systems</div><div class="pb" style="left:304.6px;top:888.2px"><span class="pc" style="background:#ffc400"></span><span class="pd"></span></div><div class="as" style="top:884.0px"><svg width="28" height="28" viewBox="0 0 28 28" fill="none"><circle cx="13" cy="13" r="12.5" stroke="#d2d2d2" stroke-width="1" stroke-dasharray="2 1.6"/><circle cx="12.3" cy="9.6" r="3" stroke="#c2c2c2" stroke-width="1.1"/><path d="M6.8 19.6c.3-3 2.6-5.2 5.5-5.2 1.4 0 2.6.5 3.6 1.3" stroke="#c2c2c2" stroke-width="1.1"/><circle cx="19.8" cy="19.8" r="5.6" fill="#bcbcbc" stroke="#fff" stroke-width="1.2"/><path d="M19.8 17.2v5.2M17.2 19.8h5.2" stroke="#fff" stroke-width="1.4"/></svg></div><div class="t" style="left:694.50px;top:891.00px;font-size:10.6px;line-height:13px;color:#45484d;letter-spacing:0.000px">Jun 15, 4:01am</div><div class="t" style="left:801.98px;top:891.00px;font-size:10.6px;line-height:13px;color:#e5383b;letter-spacing:0.000px">Jun 18, 4am</div><div class="bar" style="top:892.0px"></div><div class="t" style="left:944.55px;top:892.00px;font-size:10px;line-height:12px;color:#15894a;letter-spacing:0.000px">0%</div><div class="t" style="left:1022.58px;top:892.00px;font-size:11px;line-height:13px;color:#333333;letter-spacing:0.000px">–</div><div class="tm" style="top:869px;height:55px;background:#fd82ad"></div><div class="t" style="left:1117.30px;top:891.00px;font-size:12.6px;line-height:15px;color:#ffffff;letter-spacing:-0.100px;-webkit-text-stroke:0.25px #ffffff">HR</div><div class="dp" style="left:1183.4px;top:875px;width:129.0px"></div><div class="t" style="left:1187.85px;top:879.00px;font-size:11px;line-height:13px;color:#555555;letter-spacing:0.000px">Migrate the organizati…</div><div class="dp" style="left:1196.4px;top:899px;width:103.0px"></div><div class="t" style="left:1200.90px;top:903.00px;font-size:11px;line-height:13px;color:#555555;letter-spacing:0.000px">Implement the plan</div><div class="ti" style="top:888.9px"><svg width="20" height="20" viewBox="0 0 20 20" fill="none"><path d="M11.6 15.8H3.4c-.5 0-.8-.3-.8-.8V2.3c0-.5.3-.8.8-.8h7.9l4.3 4.3v5.4" stroke="#c8ccd3" stroke-width="1.15"/><path d="M11.2 1.7v4.2h4.2" stroke="#c8ccd3" stroke-width="1.15"/><path d="M5 7.6h1.9M5 9.9h4.4M5 12.2h4.2" stroke="#c8ccd3" stroke-width="1"/><circle cx="15" cy="14.6" r="3.3" fill="#fff" stroke="#c8ccd3" stroke-width="1.05"/><path d="M15 12.9v3.4M13.3 14.6h3.4" stroke="#c8ccd3" stroke-width="0.95"/></svg></div>
<div class="abs" style="left:1507px;top:872px;width:57px;height:32px;border-radius:8px;background:#7b68ee;box-shadow:0 3px 8px rgba(123,104,238,.35)"></div>
<svg class="abs" style="left:1507px;top:872px" width="57" height="32" viewBox="0 0 57 32"><path d="M12.9 11.3v9.2M8.3 15.9h9.2" stroke="#fff" stroke-width="1.7"/></svg>
<div class="t" style="left:1533.00px;top:882.00px;font-size:12.6px;line-height:15px;color:#ffffff;transform:scaleX(0.8364);transform-origin:0 0;font-weight:bold">Task</div>
<div class="abs" style="left:1573px;top:873px;width:30px;height:30px;border-radius:8px;background:#fff;box-shadow:0 1px 4px rgba(0,0,0,.15)"></div>
<svg class="abs" style="left:1573px;top:873px" width="30" height="30" viewBox="0 0 30 30" fill="none"><circle cx="11.5" cy="11.3" r="2.1" stroke="#e8488f" stroke-width="1.5"/><circle cx="18.5" cy="11.3" r="2.1" stroke="#f5a623" stroke-width="1.5"/><circle cx="11.5" cy="18.5" r="2.1" stroke="#3cae6e" stroke-width="1.5"/><circle cx="18.5" cy="18.5" r="2.1" stroke="#1e88d8" stroke-width="1.5"/></svg>
</body></html>
